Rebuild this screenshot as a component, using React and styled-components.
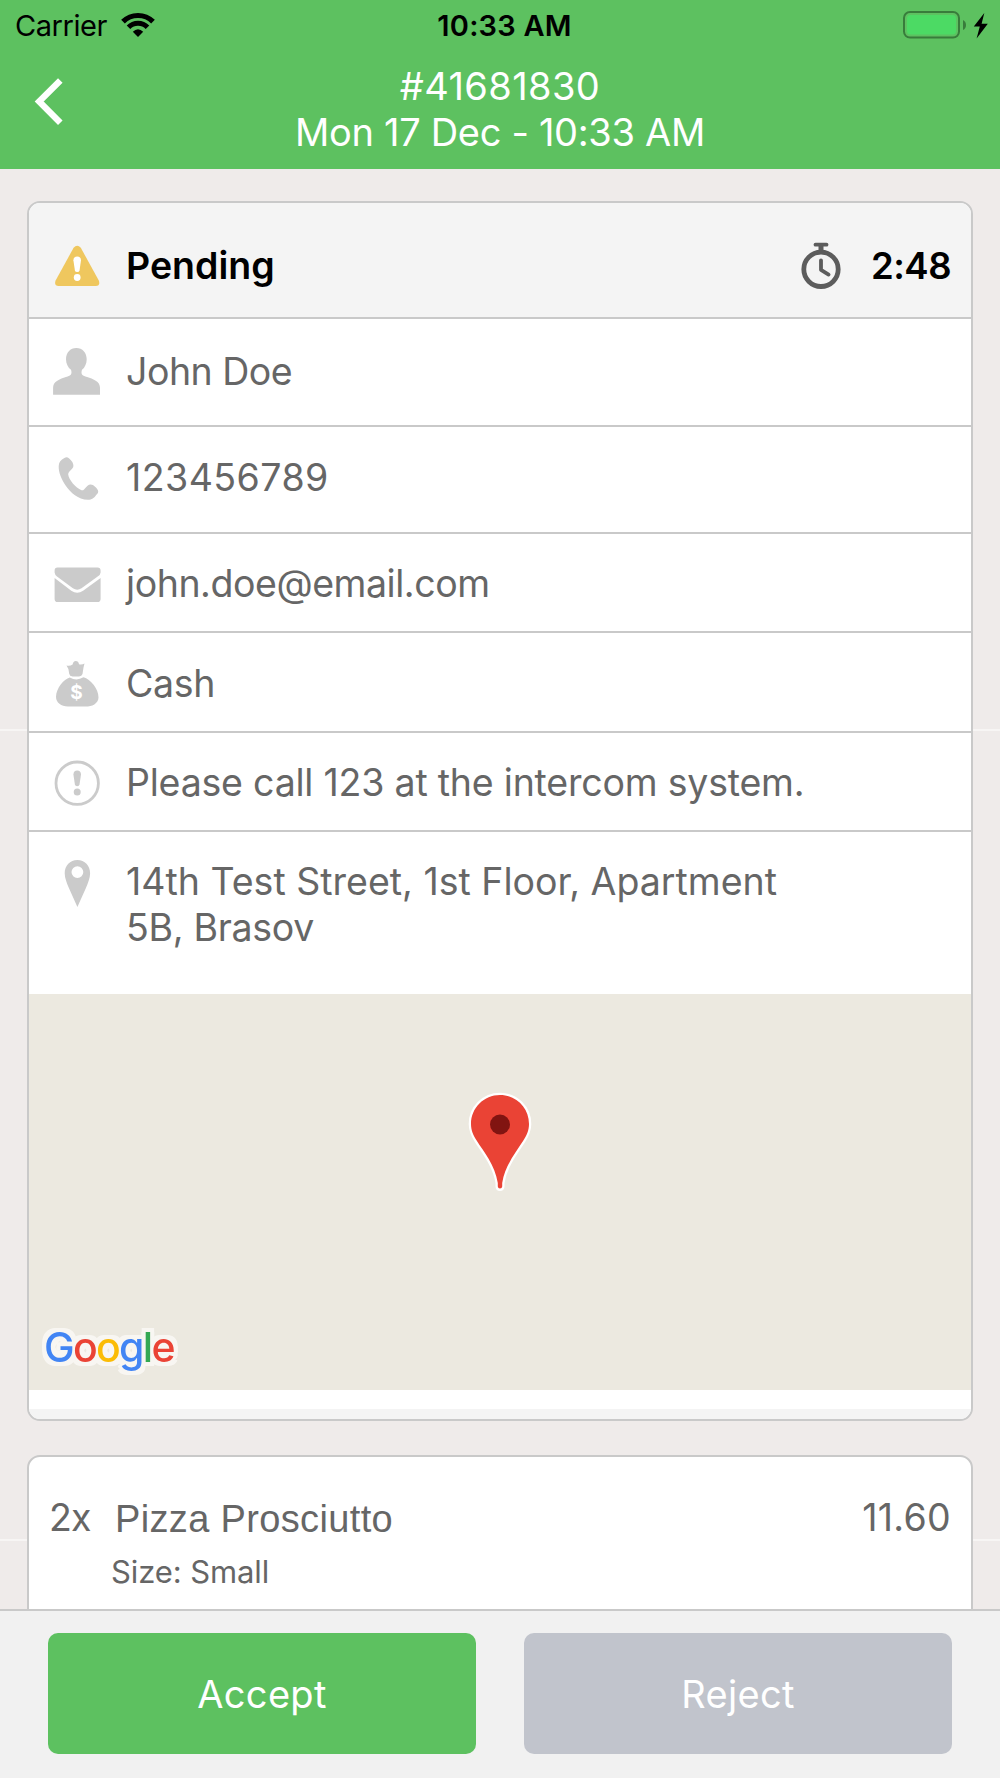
import React from "react";
import styled, { createGlobalStyle } from "styled-components";

const details = [
  { icon: "person", text: "John Doe", height: 108, top: 29, spacing: -0.5 },
  { icon: "phone", text: "123456789", height: 107, top: 27, spacing: 0.45 },
  { icon: "mail", text: "john.doe@email.com", height: 99, top: 26, spacing: -0.45 },
  { icon: "cash", text: "Cash", height: 100, top: 27, spacing: -0.3 },
  {
    icon: "note",
    text: "Please call 123 at the intercom system.",
    height: 99,
    top: 26,
    spacing: -0.21,
  },
];

function DetailIcon({ name }) {
  return (
    <Icon viewBox="0 0 48 48" aria-hidden="true">
      {name === "warning" && (
        <>
          <path
            d="M20.6 5.8Q24.2 1.8 27.8 5.8L45.8 38.4Q47.6 43.6 42.8 44H5.6Q.8 43.6 2.6 38.4Z"
            fill="#efc75e"
          />
          <path
            d="M20.4 18.2Q20.6 14.6 24.2 14.6T28 18.2L26.5 28.4Q26.2 30 24.2 30T21.9 28.4Z"
            fill="#fff"
          />
          <circle cx="24.2" cy="35.5" r="3.4" fill="#fff" />
        </>
      )}
      {name === "person" && (
        <path d="M23.3 0C29.5 0 33.7 4.8 33.7 11.2C33.7 15.6 31.8 19.6 29 21.8C27.8 25.4 28.8 27.6 32.4 28.6C41.5 31.2 47 34 47 39.8V46.7H.1V39.8C.1 34 5.6 31.2 14.6 28.6C18.2 27.6 19.2 25.4 18 21.8C15 19.6 13 15.6 13 11.2C13 4.8 17.2 0 23.3 0Z" />
      )}
      {name === "phone" && (
        <path d="M11.4 4.1C13 2.7 14.5 2.9 15.9 4.3C19 7 20.5 9.3 20.4 12C20.2 15.2 15 17.4 15.2 20.6C15.7 25.6 22.6 34.2 28.5 36.2C31.8 37.1 33.2 30.8 37.4 30.4C40.4 30.2 44 34 45 36.4C45.6 38.2 44.8 39.2 43.6 40.6C40.9 44.4 39 45.8 34.9 45.8C25 45.3 17.8 38.8 12.6 31.4C8.2 24.7 5.5 18.4 5.7 12C5.9 8.2 7.8 6.2 11.4 4.1Z" />
      )}
      {name === "mail" && (
        <>
          <path d="M4.5 7.6H44.5Q47.6 7.6 47.6 10.7V12.4Q47.4 14.5 45 16.2L28.5 28.3Q24.2 31.2 19.9 28.3L4 16.4Q1.8 14.6 1.6 12.4V10.7Q1.6 7.6 4.5 7.6Z" />
          <path d="M1.6 18.1L18.3 30.7Q24.2 34.8 30.1 30.7L47.6 18.1V39Q47.6 42.1 44.5 42.1H4.7Q1.6 42.1 1.6 39Z" />
        </>
      )}
      {name === "cash" && (
        <>
          <path d="M13.5 5.4Q16.5 6.5 19.6 4.6Q20.2 1 22.8 1.1T26 4.3Q29 5 31.5 3.5L30.5 7.6L29.5 14Q28.8 16.2 26 16.6H19.6Q16.6 16.1 16.2 13.7L15.4 9Z" />
          <path d="M16.8 17.4Q23.5 21.4 30.5 17.3C37.5 19.3 45.5 28.7 45.5 37.4C45.3 43.5 39 46.6 32.6 46.6H15C8.2 46.3 3 43 3 36.8C3.2 28 10.8 19 16.8 17.4Z" />
          <Dollar x="23.6" y="38.6" textAnchor="middle">
            $
          </Dollar>
        </>
      )}
      {name === "note" && (
        <>
          <circle cx="24.2" cy="24.2" r="21.2" fill="none" stroke="#cbcbcb" strokeWidth="2.8" />
          <path d="M20.4 15.4Q20.6 11.5 24.2 11.5T28 15.4L26.5 25.6Q26.2 27.3 24.2 27.3T21.9 25.6Z" />
          <circle cx="24.2" cy="33" r="3.5" />
        </>
      )}
      {name === "pin" && (
        <path
          fillRule="evenodd"
          d="M24.4 2C31.7 2 37.1 7.6 37.1 15.2C37.1 20 35 25 32.8 30.2L24.4 49L16 30.2C13.8 25 11.7 20 11.7 15.2C11.7 7.6 17.1 2 24.4 2ZM24.4 8.2A5.9 5.9 0 1 0 24.4 20A5.9 5.9 0 1 0 24.4 8.2Z"
        />
      )}
    </Icon>
  );
}

function StatusBar() {
  return (
    <Status>
      <Carrier>
        Carrier
        <svg width="36" height="26" viewBox="0 0 36 26" aria-hidden="true">
          <path d="M3 9.7A21.2 21.2 0 0 1 33 9.7" fill="none" stroke="#000" strokeWidth="5.2" />
          <path d="M8.5 15.2A13.4 13.4 0 0 1 27.5 15.2" fill="none" stroke="#000" strokeWidth="5" />
          <path d="M18 25L12.8 19.8Q18 14.7 23.2 19.8Z" />
        </svg>
      </Carrier>
      <Clock>10:33 AM</Clock>
      <Battery viewBox="0 0 88 30" aria-hidden="true">
        <rect x="2" y="2" width="55" height="25.6" rx="6" fill="none" stroke="#387c3b" strokeWidth="2" />
        <rect x="5" y="5" width="49" height="19.4" rx="3.5" fill="#4cda64" />
        <path d="M61 10Q64 11.5 64 15T61 20Z" fill="#387c3b" />
        <path d="M82.3 3L71.8 16.6H77.8L74.6 28.4L85.8 13.8H79.6Z" />
      </Battery>
    </Status>
  );
}

function App() {
  return (
    <Screen>
      <GlobalStyle />
      <Header>
        <StatusBar />
        <TitleBar>
          <BackButton aria-label="Back">
            <svg width="30" height="50" viewBox="0 0 30 50">
              <path d="M26.3 3.4L5.2 24.6L26.3 45.8" fill="none" stroke="#fff" strokeWidth="6.4" />
            </svg>
          </BackButton>
          <Title>
            <OrderNumber>#41681830</OrderNumber>
            <OrderDate>Mon 17 Dec - 10:33 AM</OrderDate>
          </Title>
        </TitleBar>
      </Header>

      <Content>
        <OrderCard>
          <StateRow>
            <DetailIcon name="warning" />
            <State>Pending</State>
            <Timer>
              <svg width="42" height="48" viewBox="0 0 42 48" aria-hidden="true">
                <g fill="none" stroke="#5c5c5c">
                  <circle cx="21" cy="27.3" r="17.2" strokeWidth="4.8" />
                  <path d="M15.5 2.7H26.5" strokeWidth="3.8" strokeLinecap="round" />
                  <path d="M21 3V10" strokeWidth="5" />
                  <path
                    d="M21 18.3V27.8L28.6 32.6"
                    strokeWidth="3.8"
                    strokeLinecap="round"
                    strokeLinejoin="round"
                  />
                </g>
              </svg>
              <Time>2:48</Time>
            </Timer>
          </StateRow>
          {details.map((item) => (
            <Row key={item.icon} $height={item.height} $top={item.top}>
              <DetailIcon name={item.icon} />
              <Label $spacing={item.spacing}>{item.text}</Label>
            </Row>
          ))}
          <AddressRow $height={162} $top={26}>
            <DetailIcon name="pin" />
            <div>
              <Label $spacing={0}>14th Test Street, 1st Floor, Apartment</Label>
              <AddressEnd $spacing={-0.3}>5B, Brasov</AddressEnd>
            </div>
          </AddressRow>
          <Map>
            <Marker viewBox="0 0 64 102" aria-hidden="true">
              <path
                d="M32 4C48 4 61 16.8 61 33C61 39.5 58.8 44.2 55.2 49.8C48.5 60.5 37 74 34.2 92V95.5Q34 97.6 32 97.6T29.8 95.5V92C27 74 15.5 60.5 8.8 49.8C5.2 44.2 3 39.5 3 33C3 16.8 16 4 32 4Z"
                fill="#ea4335"
                stroke="#fff"
                strokeWidth="4.6"
                paintOrder="stroke"
              />
              <circle cx="32" cy="33.5" r="10" fill="#811411" />
            </Marker>
            <Google>
              <Letter $color="#4285f4">G</Letter>
              <Letter $color="#ea4335">o</Letter>
              <Letter $color="#fbbc05">o</Letter>
              <Letter $color="#4285f4">g</Letter>
              <Letter $color="#34a853">l</Letter>
              <Letter $color="#ea4335">e</Letter>
            </Google>
          </Map>
          <MapFooter />
        </OrderCard>

        <ItemsCard>
          <Item>
            <Quantity>2x</Quantity>
            <ItemName>Pizza Prosciutto</ItemName>
            <Price>11.60</Price>
          </Item>
          <Option>Size: Small</Option>
        </ItemsCard>
      </Content>

      <Actions>
        <Action $color="#5dc160">Accept</Action>
        <Action $color="#c1c4cc">Reject</Action>
      </Actions>
    </Screen>
  );
}

const GlobalStyle = createGlobalStyle`
  * {
    box-sizing: border-box;
  }
  body {
    margin: 0;
    font-family: Inter, "Liberation Sans", sans-serif;
  }
`;

const Screen = styled.div`
  display: flex;
  flex-direction: column;
  width: 1000px;
  height: 1778px;
  overflow: hidden;
  background: #efebea;
`;

const Header = styled.header`
  height: 169px;
  flex: none;
  background: #5dc160;
  color: #fff;
`;

const Status = styled.div`
  display: grid;
  grid-template-columns: 1fr auto 1fr;
  align-items: center;
  height: 50px;
  padding: 0 10px 0 15px;
  color: #000;
  font-size: 29px;
`;

const Carrier = styled.div`
  display: flex;
  align-items: center;
  gap: 13px;
  letter-spacing: -0.45px;
`;

const Clock = styled.div`
  padding-left: 4px;
  font-weight: 600;
  font-size: 29px;
  letter-spacing: 0.2px;
`;

const Battery = styled.svg`
  width: 88px;
  height: 30px;
  justify-self: end;
`;

const TitleBar = styled.div`
  display: grid;
  grid-template-columns: 100px 1fr 100px;
  padding-top: 13px;
`;

const BackButton = styled.button`
  display: flex;
  height: 50px;
  margin: 14px 0 0 34px;
  padding: 0;
  border: 0;
  background: none;
`;

const Title = styled.h1`
  margin: 0;
  font-size: 38px;
  line-height: 46px;
  font-weight: 400;
  text-align: center;
`;

const OrderNumber = styled.div`
  letter-spacing: 0.4px;
`;

const OrderDate = styled.div`
  letter-spacing: -0.32px;
`;

const Content = styled.main`
  flex: 1;
  min-height: 0;
  overflow: hidden;
  padding: 32px 27px 0;
  background-image: linear-gradient(#f7f5f4, #f7f5f4), linear-gradient(#f7f5f4, #f7f5f4);
  background-size: 100% 2px;
  background-position: 0 560px, 0 1370px;
  background-repeat: no-repeat;
`;

const Card = styled.section`
  border: 2px solid #c9c9c9;
  border-radius: 13px;
  overflow: hidden;
  background: #fff;
`;

const OrderCard = styled(Card)`
  height: 1220px;
`;

const Row = styled.div`
  display: flex;
  height: ${(props) => props.$height}px;
  padding: ${(props) => props.$top}px 20px 0 24px;
  border-bottom: 2px solid #c9c9c9;
`;

const StateRow = styled(Row).attrs({ $height: 116, $top: 39 })`
  background: #f4f4f4;
`;

const AddressRow = styled(Row)`
  border-bottom: 0;
`;

const Icon = styled.svg`
  flex: none;
  width: 48px;
  height: 48px;
  margin-right: 25px;
  overflow: visible;
  fill: #cbcbcb;
`;

const Dollar = styled.text`
  fill: #fff;
  font-size: 19px;
  font-weight: 700;
`;

const Label = styled.div`
  margin-top: 1px;
  color: #666;
  font-size: 37.5px;
  line-height: 46px;
  letter-spacing: ${(props) => props.$spacing}px;
`;

const AddressEnd = styled(Label)`
  margin-top: 0;
`;

const State = styled.div`
  margin-top: 1px;
  color: #000;
  font-size: 37.5px;
  line-height: 46px;
  font-weight: 600;
`;

const Timer = styled.div`
  display: flex;
  margin-left: auto;
  gap: 29px;
`;

const Time = styled.div`
  margin-top: 1px;
  font-size: 36.5px;
  line-height: 46px;
  font-weight: 600;
  letter-spacing: -0.5px;
`;

const Map = styled.div`
  position: relative;
  height: 396px;
  background: #ece9e0;
`;

const Marker = styled.svg`
  position: absolute;
  top: 97px;
  left: 439px;
  width: 64px;
  height: 102px;
`;

const Google = styled.div`
  position: absolute;
  left: 15px;
  bottom: 17px;
  font-size: 41px;
  line-height: 52px;
  font-weight: 500;
  letter-spacing: -1.7px;
  filter: drop-shadow(4px 0 0 #f8f6f2) drop-shadow(-4px 0 0 #f8f6f2)
    drop-shadow(0 4px 0 #f8f6f2) drop-shadow(0 -4px 0 #f8f6f2);
`;

const Letter = styled.span`
  color: ${(props) => props.$color};
`;

const MapFooter = styled.div`
  height: 29px;
  border-top: 19px solid #fff;
  background: #f4f4f4;
`;

const ItemsCard = styled(Card)`
  height: 400px;
  margin-top: 34px;
  padding: 38px 20px 0;
  color: #666;
`;

const Item = styled.div`
  display: flex;
  font-size: 37.5px;
  line-height: 46px;
`;

const Quantity = styled.div`
  width: 66px;
  letter-spacing: -0.8px;
`;

const ItemName = styled.div`
  margin-top: 1px;
  font-family: "Liberation Sans", sans-serif;
  font-size: 38px;
  letter-spacing: 0.35px;
`;

const Price = styled.div`
  margin-left: auto;
  letter-spacing: 0.3px;
`;

const Option = styled.div`
  margin: 11px 0 0 62px;
  font-size: 31px;
  line-height: 38px;
  letter-spacing: -0.1px;
`;

const Actions = styled.footer`
  display: flex;
  gap: 48px;
  height: 169px;
  padding: 22px 48px 24px;
  border-top: 2px solid #c9c9c9;
  background: #f1f1f1;
`;

const Action = styled.button`
  flex: 1;
  height: 121px;
  padding: 0;
  border: 0;
  border-radius: 10px;
  background: ${(props) => props.$color};
  color: #fff;
  font-family: inherit;
  font-size: 38px;
  letter-spacing: 0.3px;
`;

export default App;
